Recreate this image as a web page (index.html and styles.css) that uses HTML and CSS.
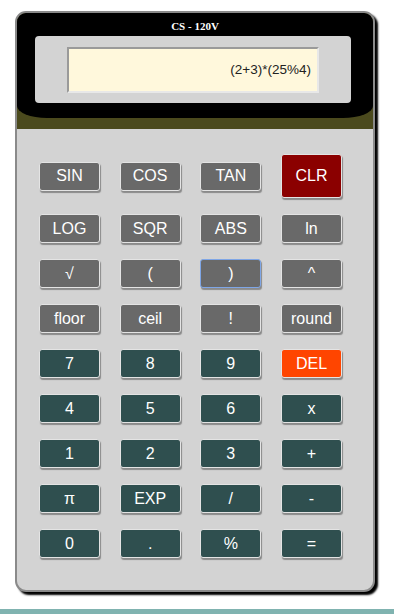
FILE: index.html
```html
<!DOCTYPE html>
<html>
<head>
<meta charset="utf-8">
<link rel="stylesheet" href="styles.css">
</head>
<body>
<div class="calc">
  <div class="head">
    <div class="top">
      <div class="title">CS - 120V</div>
      <div class="panel">
        <div class="display">(2+3)*(25%4)</div>
      </div>
    </div>
  </div>
  <div class="keys">
    <button class="k">SIN</button>
    <button class="k">COS</button>
    <button class="k">TAN</button>
    <button class="k clr">CLR</button>
    <button class="k">LOG</button>
    <button class="k">SQR</button>
    <button class="k">ABS</button>
    <button class="k">ln</button>
    <button class="k">√</button>
    <button class="k">(</button>
    <button class="k focus">)</button>
    <button class="k">^</button>
    <button class="k">floor</button>
    <button class="k">ceil</button>
    <button class="k">!</button>
    <button class="k">round</button>
    <button class="k n">7</button>
    <button class="k n">8</button>
    <button class="k n">9</button>
    <button class="k del">DEL</button>
    <button class="k n">4</button>
    <button class="k n">5</button>
    <button class="k n">6</button>
    <button class="k n">x</button>
    <button class="k n">1</button>
    <button class="k n">2</button>
    <button class="k n">3</button>
    <button class="k n">+</button>
    <button class="k n">π</button>
    <button class="k n">EXP</button>
    <button class="k n">/</button>
    <button class="k n">-</button>
    <button class="k n">0</button>
    <button class="k n">.</button>
    <button class="k n">%</button>
    <button class="k n">=</button>
  </div>
</div>
<div class="bar"></div>
</body>
</html>
```

FILE: styles.css
```css
html, body {
  margin: 0;
  padding: 0;
  background: #fff;
}
body {
  width: 394px;
  overflow: hidden;
}
.calc {
  margin: 11px 0 0 15px;
  width: 356px;
  height: 577px;
  border: 2px solid #8a8a8a;
  border-radius: 11px;
  background: #d3d3d3;
  box-shadow: 3px 3px 2px #000;
  overflow: hidden;
}
.head {
  background: #4b4a1d;
  height: 116px;
}
.top {
  background: #000;
  height: 105px;
  border-radius: 0 0 30px 30px / 0 0 12px 12px;
  padding-top: 1px;
  box-sizing: border-box;
}
.title {
  font-family: "Liberation Serif", serif;
  font-weight: bold;
  font-size: 11px;
  color: #fff;
  text-align: center;
  line-height: 13px;
  margin-top: 6px;
  height: 16px;
}
.panel {
  margin: 0 22px 0 18px;
  height: 67px;
  background: #d3d3d3;
  border-radius: 4px;
  padding: 11px 32px 0 32px;
  box-sizing: border-box;
}
.display {
  height: 46px;
  box-sizing: border-box;
  background: #fff8dc;
  border: 2px solid;
  border-color: #9a9a9a #e8e8e8 #e8e8e8 #9a9a9a;
  font-family: "Liberation Sans", Arial, sans-serif;
  font-size: 13.5px;
  color: #222;
  text-align: right;
  line-height: 42px;
  padding-right: 6px;
}
.keys {
  display: grid;
  grid-template-columns: repeat(4, 61px);
  grid-template-rows: 44px repeat(8, 29px);
  column-gap: 19.67px;
  row-gap: 16px;
  align-items: center;
  padding: 25px 0 0 22px;
}
.k {
  height: 29px;
  margin: 0;
  padding: 0;
  background: #696969;
  color: #fff;
  font-family: "Liberation Sans", Arial, sans-serif;
  font-size: 16px;
  border: 1px solid #e4e4e4;
  border-radius: 3px;
  box-shadow: 1px 2px 1px #8a8a8a;
  box-sizing: border-box;
}
.n {
  background: #2f4f4f;
}
.clr {
  height: 44px;
  background: #8b0000;
}
.del {
  background: #ff4500;
}
.focus {
  border: 1px solid #7fa6e6;
}
.bar {
  margin-top: 17px;
  height: 8px;
  background: #80b3b0;
}
```
